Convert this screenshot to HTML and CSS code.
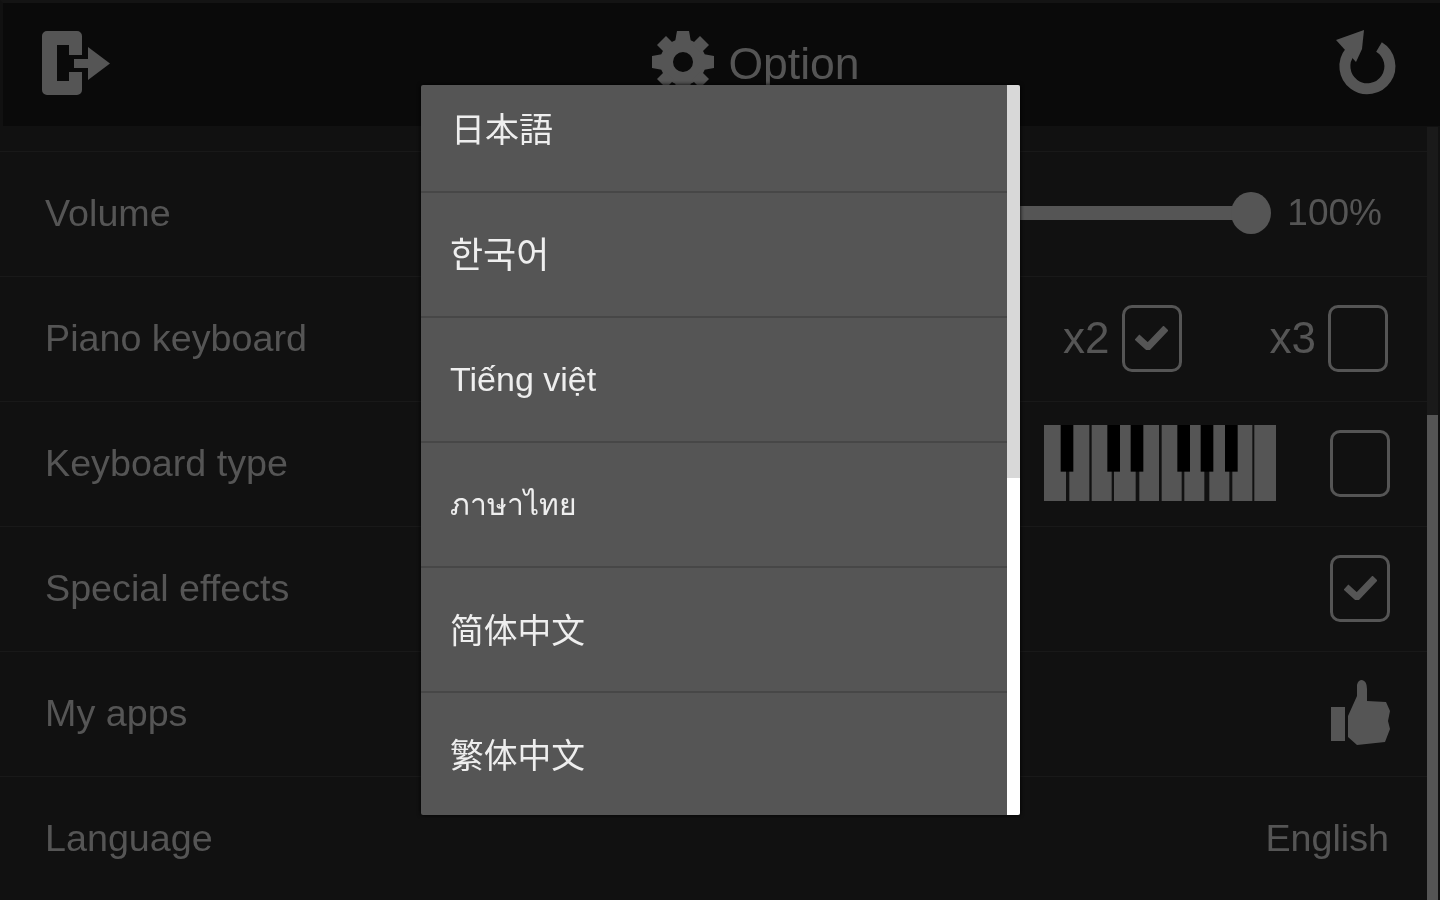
FILE: index.html
```html
<!DOCTYPE html>
<html lang="en">
<head>
<meta charset="utf-8">
<title>Option</title>
<link rel="stylesheet" href="styles.css">
</head>
<body>
<div class="app">
  <header class="header">
    <svg class="exit-icon" width="70" height="65" viewBox="0 0 70 65"><path class="fill" fill-rule="evenodd" d="M6 0H36a5 5 0 0 1 5 5V24H28V14H16V50H28V41H41V59a5 5 0 0 1-5 5H6a5 5 0 0 1-5-5V5a5 5 0 0 1 5-5Z"/><path class="fill" d="M33 28H47V16L69 32.500 47 49V37H33Z"/></svg>
    <div class="title">
      <svg class="gear" width="62" height="62" viewBox="-31 -31 62 62"><g class="fill"><path fill-rule="evenodd" d="M0-23a23 23 0 1 1 0 46 23 23 0 0 1 0-46Zm0 13a10 10 0 1 0 0 20 10 10 0 0 0 0-20Z"/><path d="M-6-31H6L8-20H-8Z"/><path d="M-6 31H6L8 20H-8Z"/><path d="M-31-6V6L-20 8V-8Z"/><path d="M31-6V6L20 8V-8Z"/><path d="M-26-17-17-26-9-18-18-9Z"/><path d="M26-17 17-26 9-18 18-9Z"/><path d="M-26 17-17 26-9 18-18 9Z"/><path d="M26 17 17 26 9 18 18 9Z"/></g></svg>
      <span>Option</span>
    </div>
    <svg class="reload-icon" width="60" height="68" viewBox="0 0 60 68"><path class="stroke" d="M42 18A22.500 22.500 0 1 1 13 23" stroke-width="11"/><path class="fill" d="M-1 11 27 1 25 20 19 33Z"/></svg>
  </header>

  <div class="main">
    <div class="rows">
      <div class="row">
        <span>Volume</span>
        <div class="slider"><div class="track"></div><div class="knob"></div></div>
        <span class="percent">100%</span>
      </div>
      <div class="row">
        <span>Piano keyboard</span>
        <div class="multi">
          <span>x2</span>
          <div class="box"><svg width="33" height="24" viewBox="14 22 33 24"><path class="stroke" d="M16 33 27 43 45 24" stroke-width="7"/></svg></div>
          <span class="multi-next">x3</span>
          <div class="box"></div>
        </div>
      </div>
      <div class="row">
        <span>Keyboard type</span>
        <div class="keytype">
          <svg class="piano" width="232" height="76" viewBox="72 405 696 228">
            <g class="fill">
              <rect x="72" y="405" width="66" height="228"/><rect x="148" y="405" width="60" height="228"/><rect x="215" y="405" width="60" height="228"/><rect x="282" y="405" width="65" height="228"/><rect x="358" y="405" width="59" height="228"/><rect x="425" y="405" width="60" height="228"/><rect x="493" y="405" width="60" height="228"/><rect x="568" y="405" width="60" height="228"/><rect x="637" y="405" width="60" height="228"/><rect x="703" y="405" width="65" height="228"/>
            </g>
            <g class="black-keys">
              <rect x="122" y="405" width="38" height="140"/><rect x="262" y="405" width="38" height="140"/><rect x="332" y="405" width="38" height="140"/><rect x="472" y="405" width="38" height="140"/><rect x="542" y="405" width="38" height="140"/><rect x="615" y="405" width="38" height="140"/>
            </g>
          </svg>
          <div class="box"></div>
        </div>
      </div>
      <div class="row">
        <span>Special effects</span>
        <div class="box"><svg width="33" height="24" viewBox="14 22 33 24"><path class="stroke" d="M16 33 27 43 45 24" stroke-width="7"/></svg></div>
      </div>
      <div class="row">
        <span>My apps</span>
        <svg class="thumb" width="60" height="66" viewBox="0 0 60 66"><path class="fill" d="M1 28H15V62H1Z"/><path class="fill" d="M18 37 27 17V6Q28 1 32 1 37 2 37 10V22L56 23 60 32 58 42 60 50 55 63 27 66 18 58Z"/></svg>
      </div>
      <div class="row">
        <span>Language</span>
        <span class="end">English</span>
      </div>
    </div>
    <div class="page-scroll"><div class="page-thumb"></div></div>
  </div>

  <div class="popup">
    <ul class="options">
      <li class="option" lang="ja">日本語</li>
      <li class="option" lang="ko">한국어</li>
      <li class="option">Tiếng việt</li>
      <li class="option" lang="th">ภาษาไทย</li>
      <li class="option" lang="zh-CN">简体中文</li>
      <li class="option" lang="zh-CN">繁体中文</li>
    </ul>
    <div class="popup-scroll"><div class="popup-thumb"></div><div class="popup-rest"></div></div>
  </div>
</div>
</body>
</html>
```
FILE: styles.css
```css
* { box-sizing: border-box; }
html, body { margin: 0; padding: 0; background: #111; }
.app {
  position: relative;
  display: flex;
  flex-direction: column;
  width: 1440px;
  height: 900px;
  overflow: hidden;
  background: #111;
  color: #555;
  font-family: "Liberation Sans", Arial, sans-serif;
  font-size: 37.7px;
  filter: blur(0.7px);
}
.fill { fill: #555; }
.stroke { fill: none; stroke: #555; }
.black-keys { fill: #000; }

.header {
  flex: 0 0 126px;
  display: flex;
  align-items: flex-start;
  justify-content: space-between;
  padding: 28px 43px 0 38px;
  background: #0a0a0a;
  border-top: 3px solid #141414;
  border-left: 3px solid #111;
}
.exit-icon { display: block; }
.title {
  display: flex;
  align-items: center;
  gap: 14px;
  margin-left: 64px;
  font-size: 44.5px;
  height: 66px;
  line-height: 66px;
}
.gear { display: block; margin-top: -4px; }
.reload-icon { display: block; overflow: visible; margin-top: -2px; }

.main { flex: 1; display: flex; min-height: 0; padding-right: 2px; }
.rows { flex: 1; padding-top: 25px; min-width: 0; }
.row {
  display: flex;
  align-items: center;
  justify-content: space-between;
  height: 125px;
  padding: 0 37px 2px 45px;
  border-top: 1px solid #191919;
}
.end { margin-right: 1px; }
.slider { flex: 1; display: flex; align-items: center; margin: 0 16px 0 300px; }
.track { flex: 1; height: 14px; background: #555; }
.knob { width: 40px; height: 42px; border-radius: 50%; background: #555; margin-left: -8px; }
.percent { margin-right: 8px; font-size: 37px; }

.multi { display: flex; align-items: center; gap: 12px; font-size: 44px; margin-right: 2px; }
.multi-next { margin-left: 76px; }
.box {
  display: flex;
  align-items: center;
  justify-content: center;
  width: 60px;
  height: 67px;
  border: 3px solid #555;
  border-radius: 10px;
}
.keytype { display: flex; align-items: center; gap: 54px; }
.piano { display: block; }
.thumb { display: block; margin-bottom: 2px; }

.page-scroll { flex: 0 0 11px; background: #1a1a1a; display: flex; flex-direction: column; margin-top: 1px; }
.page-thumb { flex: 1; margin-top: 288px; background: #555; }

.popup {
  position: absolute;
  left: 421px;
  top: 85px;
  display: flex;
  width: 599px;
  height: 730px;
  overflow: hidden;
  border-radius: 2px;
  background: #555;
  box-shadow: 0 0 4px #000;
}
.options { flex: 1; list-style: none; margin: -17px 0 0; padding: 0; min-width: 0; }
.option {
  display: flex;
  align-items: center;
  height: 125px;
  padding-left: 29px;
  border-bottom: 2px solid #474747;
  color: #eee;
  font-size: 34px;
  font-family: "Liberation Sans", "Noto Sans CJK JP", "Noto Sans", sans-serif;
}
.option:lang(ja) { padding: 0 0 4px 30px; }
.option:lang(ko) { font-family: "Noto Sans CJK KR", sans-serif; font-size: 36px; padding-bottom: 5px; }
.option:lang(zh-CN) { font-family: "Noto Sans CJK SC", sans-serif; font-size: 33.75px; padding-bottom: 3px; }
.option:lang(th) { font-family: "Noto Sans", "Liberation Sans", sans-serif; font-size: 30px; }
.popup-scroll { flex: 0 0 13px; display: flex; flex-direction: column; }
.popup-thumb { flex: 0 0 393px; background: #d8d8d8; }
.popup-rest { flex: 1; background: #fff; }
```
